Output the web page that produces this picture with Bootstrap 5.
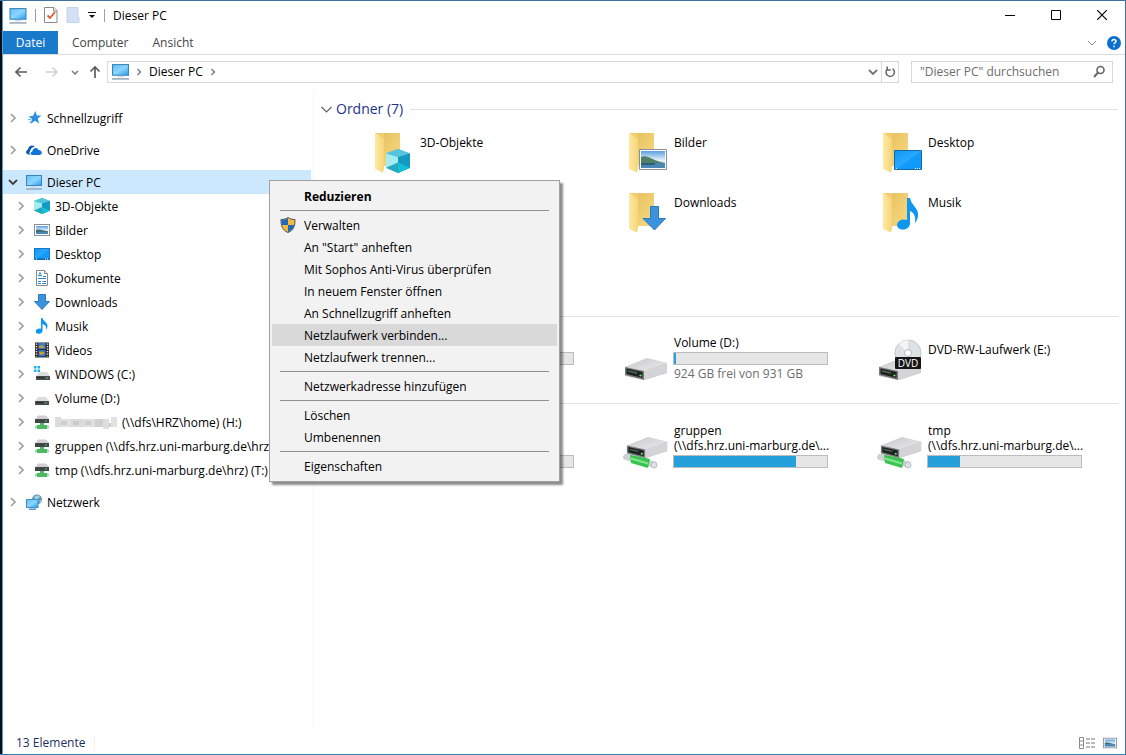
<!DOCTYPE html>
<html lang="de">
<head>
<meta charset="utf-8">
<meta name="viewport" content="width=device-width, initial-scale=1">
<title>Dieser PC</title>
<link rel="stylesheet" href="https://cdn.jsdelivr.net/npm/bootstrap@5.3.0/dist/css/bootstrap.min.css">
<style>
  body { font-family: "Open Sans", "Noto Sans", sans-serif; font-size: 12px; line-height: 15px; color: #000; background: #fff; }
  a, a:hover { color: inherit; text-decoration: none; }
  button { border: 0; padding: 0; background: none; color: inherit; display: inline-flex; align-items: center; justify-content: center; }
  svg { display: block; flex: none; }
  .window { min-height: 100vh; border: 1px solid #41719f; border-bottom-color: #2d83bd; border-left: 0; }
  .edge { border-left: 2px solid #0a0f16; }
  .edge-inner { border-left: 1px solid #4aa3dc; }
  .titlebar { height: 30px; padding: 0 0 2px 6px; }
  .caption-btn { width: 46px; height: 28px; }
  .vrule { width: 1px; height: 13px; background: #a0a0a0; }
  .ribbon { height: 24px; border-bottom: 1px solid #dadbdc; color: #444; }
  .ribbon .file-tab { width: 55px; height: 23px; background: #1979ca; color: #fff; margin-right: 2px; }
  .ribbon .tab { height: 23px; padding: 0 12px; }
  .toolbar { height: 35px; padding: 0 12px 2px 10px; color: #666; }
  .address { height: 22px; border: 1px solid #d9d9d9; color: #000; }
  .address .refresh { width: 17px; height: 20px; border-left: 1px solid #d9d9d9; }
  .search { width: 202px; height: 22px; margin-left: 12px; border: 1px solid #d9d9d9; padding: 0 6px 0 8px; }
  .search input { border: 0; outline: 0; padding: 0; min-width: 0; background: none; }
  .search input::placeholder { color: #6d6d6d; opacity: 1; }
  .sidebar { width: 311px; flex: none; border-right: 1px solid #f3f6fa; padding: 16px 2px 0 0; }
  .node { height: 24px; padding-left: 2px; gap: 5px; white-space: nowrap; overflow: hidden; color: #a0a0a0; }
  .node a { color: #000; gap: 5px; }
  .node.child { padding-left: 10px; }
  .node.selected { background: #cce8ff; color: #404040; }
  .twisty { width: 16px; height: 16px; flex: none; }
  .files { padding: 8px 7px 0 6px; min-width: 0; }
  .group-head { height: 27px; padding-bottom: 5px; gap: 3px; color: #1e3287; font-size: 14px; line-height: 20px; }
  .group-head .line { height: 1px; background: #e2e2e2; }
  .tiles { display: grid; grid-template-columns: repeat(auto-fill, 214px); grid-auto-rows: 60px; column-gap: 40px; padding-left: 49px; }
  .tile { gap: 2px; display: flex; color: #000; }
  .tile-text { width: 156px; padding: 10px 0 0 1px; }
  .tile-text.drive { padding-top: 3px; }
  .tile-text .progress { height: 13px; width: 155px; border: 1px solid #bcbcbc; border-radius: 0; background: #e6e6e6; margin: 2px 0 1px -1px; }
  .tile-text.net { padding-top: 4px; white-space: nowrap; }
  .tile-text.covered { padding-top: 18px; }
  .tile-text.net.covered { padding-top: 34px; }
  .tile-text .progress-bar { background: #26a0da; }
  .free { color: #6d6d6d; }
  .status { height: 23px; padding: 0 8px 0 13px; color: #1e2f5f; }
  .status .sep { width: 1px; height: 16px; background: #f2f2f2; }
  .ctx { position: absolute; left: 269px; top: 180px; width: 291px; padding: 4px 2px; background: #f2f2f2; border: 1px solid #a0a0a0; box-shadow: 3px 3px 2px rgba(0,0,0,.45); }
  .ctx button { width: 100%; height: 22px; justify-content: flex-start; padding-left: 8px; gap: 8px; }
  .ctx .slot { width: 16px; height: 16px; flex: none; }
  .ctx .hot { background: #d9d9d9; }
  .ctx hr { margin: 3px 8px; border: 0; border-top: 1px solid #919191; opacity: 1; }
</style>
</head>
<body>
<svg width="0" height="0" class="position-absolute" aria-hidden="true">
  <defs>
    <linearGradient id="gScreen" x1="0" y1="0" x2="1" y2="1"><stop offset="0" stop-color="#5cc0f7"/><stop offset=".5" stop-color="#8dd5ff"/><stop offset="1" stop-color="#279ff0"/></linearGradient>
    <linearGradient id="gFlap" x1="0" y1="0" x2="1" y2="0"><stop offset="0" stop-color="#ffe9a4"/><stop offset="1" stop-color="#f5d578"/></linearGradient>
    <linearGradient id="gBack" x1="0" y1="0" x2="1" y2="1"><stop offset="0" stop-color="#e6bf5c"/><stop offset="1" stop-color="#f8da84"/></linearGradient>
    <linearGradient id="gSky" x1="0" y1="0" x2="0" y2="1"><stop offset="0" stop-color="#5d9fe0"/><stop offset=".55" stop-color="#e4f2fb"/><stop offset="1" stop-color="#9cc8e6"/></linearGradient>
    <linearGradient id="gTop" x1="0" y1="0" x2="1" y2="1"><stop offset="0" stop-color="#c6c6c8"/><stop offset="1" stop-color="#ececee"/></linearGradient>
    <linearGradient id="gDesk" x1="0" y1="0" x2="1" y2="1"><stop offset="0" stop-color="#0f96f5"/><stop offset=".5" stop-color="#2ba8ff"/><stop offset=".52" stop-color="#139cfb"/><stop offset="1" stop-color="#0d97f7"/></linearGradient>
  </defs>
  <symbol id="pc" viewBox="0 0 16 16"><rect x=".5" y="1.500" width="15" height="10" fill="url(#gScreen)" stroke="#3b84b8"/><path d="M5 13h6" stroke="#c6d3dd"/><path d="M0 15h16" stroke="#7f98aa" stroke-width="1.200"/></symbol>
  <symbol id="cube" viewBox="0 0 16 16"><path d="M8 0l8 3v9.500L8 16l-8-3.500V3z" fill="#2bbcd4"/><path d="M0 3l8-3 8 3-8 2.500z" fill="#55c4dc"/><path d="M0 3l8 2.500V16l-8-3.500z" fill="#a5ecf0"/><path d="M0 12.500L8 9v7z" fill="#25a9bf"/><path d="M8 5.500L16 3v9.500L8 16z" fill="#1399c2"/><path d="M8 9l8 3.500L8 16z" fill="#12bfd6"/></symbol>
  <symbol id="pic" viewBox="0 0 16 16"><rect x=".5" y="2.500" width="15" height="11" fill="#fff" stroke="#8a8fa0"/><rect x="2" y="4" width="12" height="8" fill="url(#gSky)"/><path d="M2 8c4-1.500 7 1 12 1.200V10H2z" fill="#3b6f78"/><path d="M2 10h12v2H2z" fill="#4a86b4"/></symbol>
  <symbol id="desk" viewBox="0 0 16 16"><rect x=".5" y="2.500" width="15" height="11" fill="url(#gDesk)" stroke="#1877bd"/><path d="M1 13h14" stroke="#0b5d9e"/><path d="M2 13h1M11 13h3" stroke="#fff" stroke-dasharray="1 1"/></symbol>
  <symbol id="doc" viewBox="0 0 16 16"><path d="M2.500.5h8l3 3v12h-11z" fill="#fff" stroke="#8b8b8b"/><path d="M10.500.5v3h3" fill="#e8e8e8" stroke="#8b8b8b"/><path d="M4 5.500h4M4 8.500h8M4 11.500h3M8 13.500h4M9 6.500h3M4 13.500h3M8.500 11.500h3.500" stroke="#2f86c9"/><path d="M5 4.500l1-2 1 2" fill="none" stroke="#2f86c9"/></symbol>
  <symbol id="down" viewBox="0 0 16 16"><path d="M4.500.5h7v7h4L8 15.500.5 7.500h4z" fill="#3b93de" stroke="#2b78bd"/></symbol>
  <symbol id="note" viewBox="0 0 16 16"><path d="M7 0h1.500c.3 3.200 5 4 5 7.800 0 1.700-.8 3-1.700 4 .8-2.800 0-4.800-3.300-5.800v6.500c0 2-1.500 3.300-3.700 3.300-1.900 0-3-1-3-2.300 0-1.700 1.700-3 3.700-3 .6 0 1.100.1 1.500.3z" fill="#0d97ee"/></symbol>
  <symbol id="film" viewBox="0 0 16 16"><path d="M1 .5h14v15H1z" fill="#2a2a2c"/><path d="M4.500 1h7v6h-7z" fill="#3c79c8"/><path d="M4.500 8h7v6.500h-7z" fill="#3373c4"/><path d="M5 4l3-1 3 3H5z" fill="#c69a3d"/><path d="M5 10l4-.5 2 2.500-5 1z" fill="#d39a37"/><path d="M2.500 1.500v13M13.500 1.500v13" stroke="#e9e9e9" stroke-width="1.500" stroke-dasharray="1.200 1.300"/></symbol>
  <symbol id="hdd" viewBox="0 0 16 16"><path d="M4 7h8l3 4H1z" fill="#dcdcde"/><rect x="1" y="11" width="14" height="4" rx=".5" fill="#4a4a4c"/><path d="M2 12.500h7" stroke="#2b2b2b"/><path d="M11 13h2" stroke="#46d15a"/></symbol>
  <symbol id="win" viewBox="0 0 16 16"><path d="M0 0h2.500v2.500H0zM3.500 0H6v2.500H3.500zM0 3.500h2.500V6H0zM3.500 3.500H6V6H3.500z" fill="#18b2e2"/><use href="#hdd" x="1" y="-1" width="16" height="16"/></symbol>
  <symbol id="nhdd" viewBox="0 0 16 16"><path d="M4 1.500h8l3 3.500H1z" fill="#cfcfd1"/><rect x="1" y="5" width="14" height="4" fill="#454547"/><path d="M11 7h2" stroke="#46d15a"/><path d="M6 9h4v2h3v4H3v-4h3z" fill="#4cb963"/><path d="M1 13h2M13 13h2" stroke="#a5d8ae" stroke-width="3"/></symbol>
  <symbol id="net" viewBox="0 0 16 16"><circle cx="11" cy="5.500" r="5" fill="#5d98bd"/><path d="M8 3c2-2 5-2 6-.500l-2 2.500-2 .5zM13 7l3-1-1 3z" fill="#a8cfd8"/><rect x=".5" y="5.500" width="11.500" height="8" fill="url(#gScreen)" stroke="#3d8fc4"/><path d="M3 15.200h7" stroke="#4d90be" stroke-width="1.400"/></symbol>
  <symbol id="cloud" viewBox="0 0 16 16"><path d="M5 12.500H2.800C-.5 12.500-.8 8.300 2 7.700 2 4.300 6 2 8.800 4.700c-3 .3-4.400 2-4.500 4.200-1.500.9-1 2.900.7 3.600z" fill="#0a5cb8"/><path d="M6 13c-2-.5-1.700-3.300.3-3.500C6.500 5.800 11 4.800 12.500 8c3.500-.3 4.600 4.300 1.500 5z" fill="#1374d8"/></symbol>
  <symbol id="star" viewBox="0 0 16 16"><path d="M9.500 1l1.300 4.500L15.500 5.500l-3.700 3 1.300 5L9 10.800 4.500 14l1.500-5L2.500 6.500l4.500-.7z" fill="#2c90dc"/><path d="M2 9.500h3M3 12h2" stroke="#6bb5ea"/></symbol>
  <symbol id="chev" viewBox="0 0 16 16"><path d="M6 4l4 4-4 4" fill="none" stroke="currentColor" stroke-width="1.700"/></symbol>
  <symbol id="chevDown" viewBox="0 0 16 16"><path d="M4 6l4 4 4-4" fill="none" stroke="currentColor" stroke-width="1.800"/></symbol>
  <symbol id="folder" viewBox="0 0 48 48"><path d="M10 8h21v33H10z" fill="url(#gBack)"/><path d="M6 8l9 6v29.500l-1 4L6 44z" fill="url(#gFlap)"/><path d="M6 8h9v6z" fill="#f0ce70"/></symbol>
  <symbol id="bigDrive" viewBox="0 0 48 28"><path d="M2 12L24 3.500 44 8v10L22 25 2 21z" fill="#c9c9cb"/><path d="M2 12L24 3 44 8 21 16z" fill="url(#gTop)"/><path d="M21 16l23-8v9.500L21 25z" fill="#d4d4d8"/><path d="M2 12l19 4v9L2 20z" fill="#77777a"/><path d="M3.500 13.500L19.500 17v6L3.500 19z" fill="#1c211f"/><path d="M5 16l9 2" stroke="#4d6b58" stroke-width="1.500"/><circle cx="17.500" cy="20.500" r="1.100" fill="#5ff06a"/></symbol>
  <symbol id="bigNet" viewBox="0 0 48 36"><path d="M3 22l28 7.500" stroke="#cfd2d4" stroke-width="6" stroke-linecap="round"/><path d="M7 19l20 5-2 9-17-5z" fill="#39c450"/><path d="M8 23.500l17 5" stroke="#86e592" stroke-width="2"/><circle cx="31" cy="30" r="3" fill="#dfe2e4" stroke="#b9bcc0"/><use href="#bigDrive" x="2" y="-1" width="46" height="27"/></symbol>
</svg>

<div class="window d-flex">
 <div class="edge d-flex flex-grow-1">
 <div class="edge-inner d-flex flex-column flex-grow-1">
  <header class="titlebar d-flex align-items-center">
    <svg width="18" height="17"><use href="#pc"/></svg>
    <span class="vrule ms-2"></span>
    <button type="button" class="ms-2" aria-label="Eigenschaften"><svg width="14" height="16" viewBox="0 0 14 16"><path d="M.5.500h9.500l3 3v12H.500z" fill="#fff" stroke="#8b8b8b"/><path d="M9.500.500v3.500H13" fill="#eee" stroke="#8b8b8b"/><path d="M3.500 8.500l2.500 2.500 5-6" fill="none" stroke="#e0562b" stroke-width="1.800"/></svg></button>
    <button type="button" class="ms-2" aria-label="Neuer Ordner"><svg width="14" height="16" viewBox="0 0 14 16"><path d="M1 .500h11v9l1 1v5H1z" fill="#d3e0f3" stroke="#c3d3ea"/></svg></button>
    <button type="button" class="ms-2" aria-label="Anpassen"><svg width="8" height="8" viewBox="0 0 8 8"><path d="M0 1.500h8" stroke="#111"/><path d="M1 4h6L4 7z" fill="#111"/></svg></button>
    <span class="vrule ms-2"></span>
    <span class="ms-2 flex-grow-1">Dieser PC</span>
    <button type="button" class="caption-btn" aria-label="Minimieren"><svg width="10" height="10"><path d="M0 5.500h10" stroke="#000"/></svg></button>
    <button type="button" class="caption-btn" aria-label="Maximieren"><svg width="10" height="10"><path d="M.5.500h9v9h-9z" fill="none" stroke="#000"/></svg></button>
    <button type="button" class="caption-btn" aria-label="Schließen"><svg width="10" height="10"><path d="M0 0l10 10M10 0L0 10" stroke="#000" stroke-width="1.200"/></svg></button>
  </header>

  <nav class="ribbon d-flex align-items-center" aria-label="Menüband">
    <button type="button" class="file-tab">Datei</button>
    <button type="button" class="tab">Computer</button>
    <button type="button" class="tab me-auto">Ansicht</button>
    <button type="button" class="me-2" aria-label="Menüband erweitern"><svg width="14" height="14" viewBox="0 0 14 14"><path d="M3 5l4 4 4-4" fill="none" stroke="#8a8a8a"/></svg></button>
    <button type="button" class="me-1" aria-label="Hilfe"><svg width="14" height="14" viewBox="0 0 14 14"><circle cx="7" cy="7" r="7" fill="#0b6fd0"/><path d="M5 5.500c0-2.500 4-2.500 4-.2 0 1.400-2 1.500-2 3M7 9.700v1.500" fill="none" stroke="#fff" stroke-width="1.500"/></svg></button>
  </nav>

  <div class="toolbar d-flex align-items-center">
    <button type="button" aria-label="Zurück"><svg width="16" height="16" viewBox="0 0 16 16"><path d="M14 8H3M7.500 3.500L3 8l4.500 4.500" fill="none" stroke="#5c5c5c" stroke-width="1.700"/></svg></button>
    <button type="button" class="ms-3" aria-label="Vorwärts"><svg width="16" height="16" viewBox="0 0 16 16"><path d="M1 8h11M7.500 3.500L12 8l-4.500 4.500" fill="none" stroke="#d0d0d0" stroke-width="1.500"/></svg></button>
    <button type="button" class="ms-2" aria-label="Verlauf"><svg width="14" height="14" viewBox="0 0 14 14"><path d="M3 6l3 3 3-3" fill="none" stroke="#777" stroke-width="1.500"/></svg></button>
    <button type="button" class="ms-1" aria-label="Nach oben"><svg width="16" height="16" viewBox="0 0 16 16"><path d="M8 14V3M3.500 7.500L8 3l4.500 4.500" fill="none" stroke="#5c5c5c" stroke-width="1.700"/></svg></button>
    <div class="address d-flex align-items-center flex-grow-1 ms-1">
      <svg width="17" height="17" class="ms-1"><use href="#pc"/></svg>
      <svg width="12" height="12" class="text-secondary ms-1"><use href="#chev"/></svg>
      <a href="#" class="ms-1">Dieser PC</a>
      <svg width="12" height="12" class="text-secondary ms-1"><use href="#chev"/></svg>
      <button type="button" class="ms-auto text-secondary" aria-label="Vorherige Orte"><svg width="16" height="16"><use href="#chevDown"/></svg></button>
      <button type="button" class="refresh" aria-label="Aktualisieren"><svg width="12" height="12" viewBox="0 0 12 12"><path d="M8.500 2.700A4.200 4.200 0 1 1 3 3.500M3.200.500v3.500h3.500" fill="none" stroke="#666" stroke-width="1.500"/></svg></button>
    </div>
    <label class="search d-flex align-items-center">
      <input type="text" class="flex-grow-1" aria-label="Suche" placeholder="&quot;Dieser PC&quot; durchsuchen">
      <svg width="14" height="14" viewBox="0 0 14 14"><circle cx="8.500" cy="5" r="3.500" fill="none" stroke="#666" stroke-width="1.600"/><path d="M6 7.500L2 12" stroke="#666" stroke-width="2"/></svg>
    </label>
  </div>

  <div class="d-flex flex-grow-1">
    <aside class="sidebar">
      <ul class="list-unstyled mb-0">
        <li class="node d-flex align-items-center mb-2"><button type="button" class="twisty" aria-label="Erweitern"><svg width="16" height="16"><use href="#chev"/></svg></button><a href="#" class="d-flex align-items-center"><svg width="16" height="16"><use href="#star"/></svg>Schnellzugriff</a></li>
        <li class="node d-flex align-items-center mb-2"><button type="button" class="twisty" aria-label="Erweitern"><svg width="16" height="16"><use href="#chev"/></svg></button><a href="#" class="d-flex align-items-center"><svg width="16" height="16"><use href="#cloud"/></svg>OneDrive</a></li>
        <li class="node selected d-flex align-items-center"><button type="button" class="twisty" aria-label="Reduzieren"><svg width="16" height="16"><use href="#chevDown"/></svg></button><a href="#" class="d-flex align-items-center"><svg width="16" height="16"><use href="#pc"/></svg>Dieser PC</a></li>
        <li class="node child d-flex align-items-center"><button type="button" class="twisty" aria-label="Erweitern"><svg width="16" height="16"><use href="#chev"/></svg></button><a href="#" class="d-flex align-items-center"><svg width="16" height="16"><use href="#cube"/></svg>3D-Objekte</a></li>
        <li class="node child d-flex align-items-center"><button type="button" class="twisty" aria-label="Erweitern"><svg width="16" height="16"><use href="#chev"/></svg></button><a href="#" class="d-flex align-items-center"><svg width="16" height="16"><use href="#pic"/></svg>Bilder</a></li>
        <li class="node child d-flex align-items-center"><button type="button" class="twisty" aria-label="Erweitern"><svg width="16" height="16"><use href="#chev"/></svg></button><a href="#" class="d-flex align-items-center"><svg width="16" height="16"><use href="#desk"/></svg>Desktop</a></li>
        <li class="node child d-flex align-items-center"><button type="button" class="twisty" aria-label="Erweitern"><svg width="16" height="16"><use href="#chev"/></svg></button><a href="#" class="d-flex align-items-center"><svg width="16" height="16"><use href="#doc"/></svg>Dokumente</a></li>
        <li class="node child d-flex align-items-center"><button type="button" class="twisty" aria-label="Erweitern"><svg width="16" height="16"><use href="#chev"/></svg></button><a href="#" class="d-flex align-items-center"><svg width="16" height="16"><use href="#down"/></svg>Downloads</a></li>
        <li class="node child d-flex align-items-center"><button type="button" class="twisty" aria-label="Erweitern"><svg width="16" height="16"><use href="#chev"/></svg></button><a href="#" class="d-flex align-items-center"><svg width="16" height="16"><use href="#note"/></svg>Musik</a></li>
        <li class="node child d-flex align-items-center"><button type="button" class="twisty" aria-label="Erweitern"><svg width="16" height="16"><use href="#chev"/></svg></button><a href="#" class="d-flex align-items-center"><svg width="16" height="16"><use href="#film"/></svg>Videos</a></li>
        <li class="node child d-flex align-items-center"><button type="button" class="twisty" aria-label="Erweitern"><svg width="16" height="16"><use href="#chev"/></svg></button><a href="#" class="d-flex align-items-center"><svg width="16" height="16"><use href="#win"/></svg>WINDOWS (C:)</a></li>
        <li class="node child d-flex align-items-center"><button type="button" class="twisty" aria-label="Erweitern"><svg width="16" height="16"><use href="#chev"/></svg></button><a href="#" class="d-flex align-items-center"><svg width="16" height="16"><use href="#hdd"/></svg>Volume (D:)</a></li>
        <li class="node child d-flex align-items-center"><button type="button" class="twisty" aria-label="Erweitern"><svg width="16" height="16"><use href="#chev"/></svg></button><a href="#" class="d-flex align-items-center"><svg width="16" height="16"><use href="#nhdd"/></svg><svg width="62" height="14" viewBox="0 0 62 14" aria-hidden="true"><path d="M0 2h6v10H0z" fill="#dcdcdc"/><path d="M6 4h10v8H6z" fill="#e2e2e2"/><path d="M6 6h6v4H6z" fill="#cfcfcf"/><path d="M16 4h12v8H16z" fill="#dadada"/><path d="M18 6h6v4h-6z" fill="#cbcbcb"/><path d="M28 4h12v8H28z" fill="#dedede"/><path d="M30 6h6v4h-6z" fill="#cecece"/><path d="M40 4h8v8h-8z" fill="#d0d0d0"/><path d="M48 4h6v10h-6z" fill="#dedede"/><path d="M54 8h2v4h-2z" fill="#cdcdcd"/><path d="M56 2h6v10h-6z" fill="#e2e2e2"/></svg>(\\dfs\HRZ\home) (H:)</a></li>
        <li class="node child d-flex align-items-center"><button type="button" class="twisty" aria-label="Erweitern"><svg width="16" height="16"><use href="#chev"/></svg></button><a href="#" class="d-flex align-items-center"><svg width="16" height="16"><use href="#nhdd"/></svg>gruppen (\\dfs.hrz.uni-marburg.de\hrz) (</a></li>
        <li class="node child d-flex align-items-center mb-2"><button type="button" class="twisty" aria-label="Erweitern"><svg width="16" height="16"><use href="#chev"/></svg></button><a href="#" class="d-flex align-items-center"><svg width="16" height="16"><use href="#nhdd"/></svg>tmp (\\dfs.hrz.uni-marburg.de\hrz) (T:)</a></li>
        <li class="node d-flex align-items-center"><button type="button" class="twisty" aria-label="Erweitern"><svg width="16" height="16"><use href="#chev"/></svg></button><a href="#" class="d-flex align-items-center"><svg width="16" height="16"><use href="#net"/></svg>Netzwerk</a></li>
      </ul>
    </aside>

    <main class="files flex-grow-1">
      <div class="group-head d-flex align-items-center"><svg width="13" height="13" viewBox="0 0 13 13"><path d="M1.500 4l5 5 5-5" fill="none" stroke="#666" stroke-width="1.200"/></svg><span>Ordner (7)</span><span class="line flex-grow-1 ms-1"></span></div>
      <div class="tiles">
        <a href="#" class="tile"><svg width="48" height="48" viewBox="0 0 48 48"><use href="#folder" width="48" height="48"/><use href="#cube" x="17" y="24" width="24" height="24"/></svg><span class="tile-text">3D-Objekte</span></a>
        <a href="#" class="tile"><svg width="48" height="48" viewBox="0 0 48 48"><use href="#folder" width="48" height="48"/><path d="M16.500 24.500h27v20h-27z" fill="#fff" stroke="#8a8fa0"/><path d="M18 26h24v17H18z" fill="url(#gSky)"/><path d="M18 32c6-3 12 4 24 6v1H18z" fill="#4f8067"/><path d="M18 38h24v5H18z" fill="#4c86b3"/><path d="M18 39h14" stroke="#2f5f78" stroke-width="2"/></svg><span class="tile-text">Bilder</span></a>
        <a href="#" class="tile"><svg width="48" height="48" viewBox="0 0 48 48"><use href="#folder" width="48" height="48"/><path d="M17.500 25.500h27v19h-27z" fill="url(#gDesk)" stroke="#1469a8"/><path d="M19 43.500h1M38 43.500h6" stroke="#fff" stroke-dasharray="1 1"/></svg><span class="tile-text">Desktop</span></a>
        <a href="#" class="tile" aria-label="Dokumente"></a>
        <a href="#" class="tile"><svg width="48" height="48" viewBox="0 0 48 48"><use href="#folder" width="48" height="48"/><path d="M27.500 21.500h8v12h7L31.500 45 20 33.500h7.500z" fill="#3b93de" stroke="#2b78bd"/></svg><span class="tile-text">Downloads</span></a>
        <a href="#" class="tile"><svg width="48" height="48" viewBox="0 0 48 48"><use href="#folder" width="48" height="48"/><path d="M30 13h3c1 7 9 10 8 18-.300 3-1.500 5-3 7 1-7-1-10-5-12v12c0 4-3 6.500-7 6.500-3.500 0-6-2-6-4.500 0-3.500 3.500-5.500 7-5.500 1 0 2 .200 3 .6z" fill="#0d97ee"/></svg><span class="tile-text">Musik</span></a>
        <a href="#" class="tile" aria-label="Videos"></a>
      </div>

      <div class="group-head d-flex align-items-center"><span class="line flex-grow-1"></span></div>
      <div class="tiles">
        <a href="#" class="tile" aria-label="Laufwerk C"><span class="px-4"></span><span class="tile-text covered"><span class="progress"></span></span></a>
        <a href="#" class="tile"><svg width="48" height="52" viewBox="0 0 48 52"><use href="#bigDrive" y="23" width="48" height="28"/></svg><span class="tile-text drive">Volume (D:)<span class="progress" role="progressbar" aria-label="Belegt" aria-valuenow="1"><span class="progress-bar" style="width:1%"></span></span><span class="free">924 GB frei von 931 GB</span></span></a>
        <a href="#" class="tile"><svg width="48" height="52" viewBox="0 0 48 52"><use href="#bigDrive" y="23" width="48" height="28"/><circle cx="31" cy="21" r="13" fill="#dde3e4" stroke="#c2c8ca"/><path d="M31 21L22 12a13 13 0 0 1 9-4z" fill="#f2f6f6"/><circle cx="31" cy="21" r="3.500" fill="#fff" stroke="#b4babc"/><rect x="18" y="25" width="26" height="12" rx="1" fill="#161616"/><text x="31" y="35" text-anchor="middle" font-size="10" fill="#fff">DVD</text></svg><span class="tile-text">DVD-RW-Laufwerk (E:)</span></a>
      </div>

      <div class="group-head d-flex align-items-center"><span class="line flex-grow-1"></span></div>
      <div class="tiles">
        <a href="#" class="tile" aria-label="Netzlaufwerk H"><span class="px-4"></span><span class="tile-text net covered"><span class="progress"></span></span></a>
        <a href="#" class="tile"><svg width="48" height="52" viewBox="0 0 48 52"><use href="#bigNet" y="16" width="48" height="36"/></svg><span class="tile-text net">gruppen<br>(\\dfs.hrz.uni-marburg.de\...<span class="progress" role="progressbar" aria-label="Belegt" aria-valuenow="80"><span class="progress-bar" style="width:80%"></span></span></span></a>
        <a href="#" class="tile"><svg width="48" height="52" viewBox="0 0 48 52"><use href="#bigNet" y="16" width="48" height="36"/></svg><span class="tile-text net">tmp<br>(\\dfs.hrz.uni-marburg.de\...<span class="progress" role="progressbar" aria-label="Belegt" aria-valuenow="21"><span class="progress-bar" style="width:21%"></span></span></span></a>
      </div>
    </main>
  </div>

  <footer class="status d-flex align-items-center">
    <span>13 Elemente</span><span class="sep ms-2 me-auto"></span>
    <button type="button" aria-label="Details"><svg width="16" height="12" viewBox="0 0 16 12"><path d="M.5.500h4v11h-4zM.5 4h4M.5 8h4" fill="none" stroke="#8a8a8a"/><path d="M7 2h4M12 2h4M7 6h4M12 6h4M7 10h4M12 10h4" stroke="#777"/></svg></button>
    <button type="button" class="ms-2" aria-label="Große Symbole"><svg width="14" height="14"><use href="#pic"/></svg></button>
  </footer>
 </div>
 </div>
</div>

<div class="ctx" role="menu">
  <button type="button" class="fw-bold"><span class="slot"></span>Reduzieren</button>
  <hr>
  <button type="button"><svg width="16" height="16" viewBox="0 0 16 16"><path d="M8 .500c2 1.500 4.500 2 7 2 0 6-1 10.500-7 13-6-2.500-7-7-7-13 2.500 0 5-.500 7-2z" fill="#f9b93a" stroke="#44515e"/><path d="M8 1.200V8H1.700C1.500 6.500 1.500 5 1.500 3 4 3 6 2.500 8 1.200zM8 8h6.300c-.7 3.500-2.500 5.600-6.300 7z" fill="#1d69bd"/></svg>Verwalten</button>
  <button type="button"><span class="slot"></span>An "Start" anheften</button>
  <button type="button"><span class="slot"></span>Mit Sophos Anti-Virus überprüfen</button>
  <button type="button"><span class="slot"></span>In neuem Fenster öffnen</button>
  <button type="button"><span class="slot"></span>An Schnellzugriff anheften</button>
  <button type="button" class="hot"><span class="slot"></span>Netzlaufwerk verbinden...</button>
  <button type="button"><span class="slot"></span>Netzlaufwerk trennen...</button>
  <hr>
  <button type="button"><span class="slot"></span>Netzwerkadresse hinzufügen</button>
  <hr>
  <button type="button"><span class="slot"></span>Löschen</button>
  <button type="button"><span class="slot"></span>Umbenennen</button>
  <hr>
  <button type="button"><span class="slot"></span>Eigenschaften</button>
</div>
<script src="https://cdn.jsdelivr.net/npm/bootstrap@5.3.0/dist/js/bootstrap.bundle.min.js"></script>
</body>
</html>
